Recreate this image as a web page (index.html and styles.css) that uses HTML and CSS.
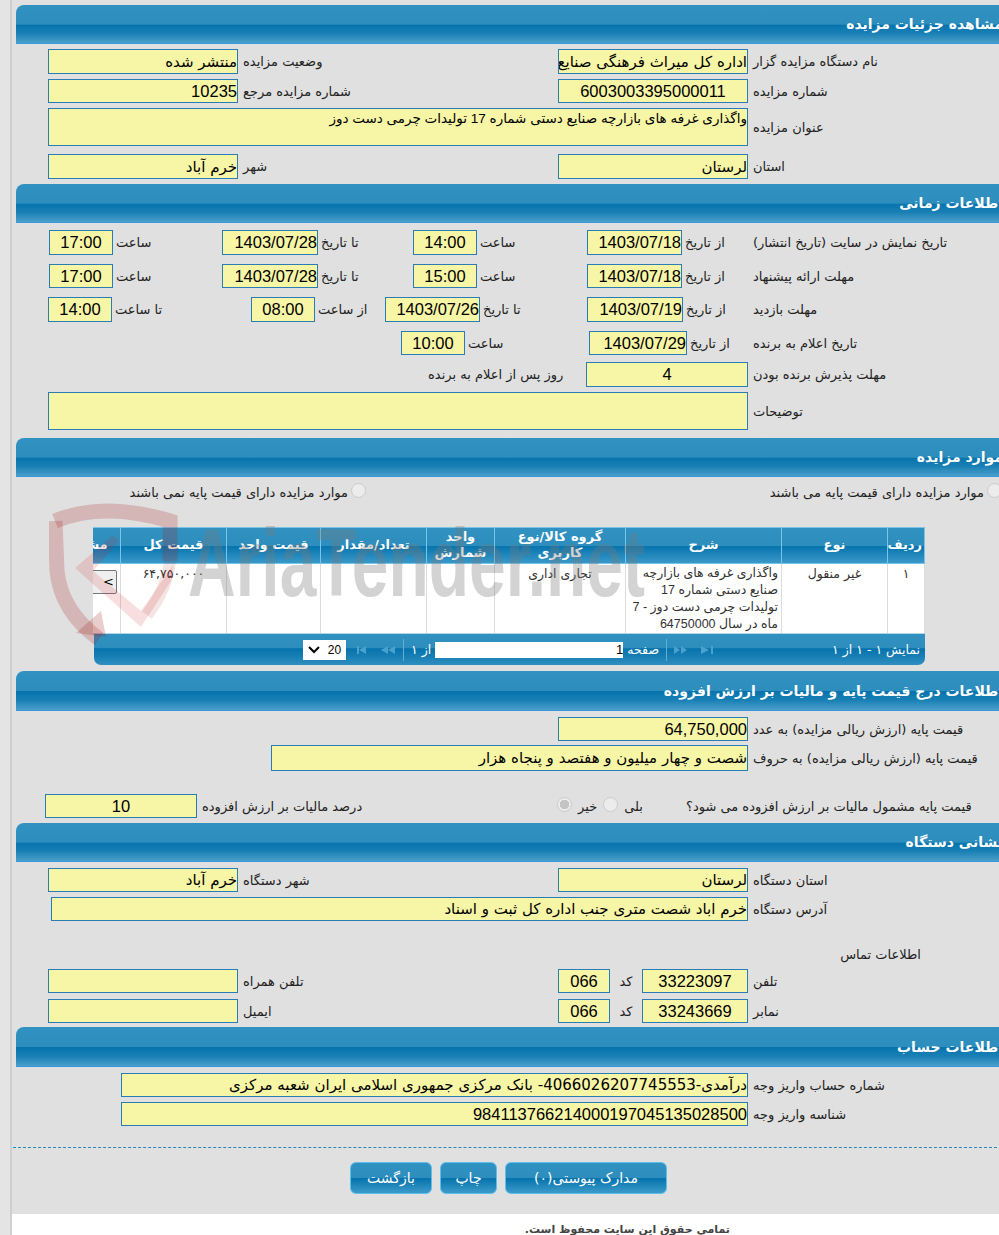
FILE: index.html
```html
<!DOCTYPE html>
<html lang="fa">
<head>
<meta charset="utf-8">
<title>مشاهده جزئیات مزایده</title>
<link rel="stylesheet" href="styles.css">
</head>
<body>
<div class="shell">
<main class="main" dir="rtl">

<h2 class="bar">مشاهده جزئیات مزایده</h2>
<div class="row mt5"><label class="lbl w257">نام دستگاه مزایده گزار</label><input class="fld w190 strong" readonly value="اداره کل میراث فرهنگی صنایع دستی و گردشگری استان لرستان"><label class="lbl w315">وضعیت مزایده</label><input class="fld w190 strong" readonly value="منتشر شده"></div>
<div class="row mt5"><label class="lbl w257">شماره مزایده</label><input class="fld w190 h24 ctr" readonly value="6003003395000011"><label class="lbl w315">شماره مزایده مرجع</label><input class="fld w190 h24" readonly value="10235"></div>
<div class="row mt5"><label class="lbl w257">عنوان مزایده</label><textarea class="fld area w700" readonly>واگذاری غرفه های بازارچه صنایع دستی شماره 17 تولیدات چرمی دست دوز</textarea></div>
<div class="row mt8"><label class="lbl w257">استان</label><input class="fld w190 strong" readonly value="لرستان"><label class="lbl w315">شهر</label><input class="fld w190 strong" readonly value="خرم آباد"></div>

<h2 class="bar mt5">اطلاعات زمانی</h2>
<div class="row mt7"><label class="lbl w257">تاریخ نمایش در سایت (تاریخ انتشار)</label><label class="lbl w63 tight">از تاریخ</label><input class="fld w95" readonly value="1403/07/18"><label class="lbl w107 tight">ساعت</label><input class="fld w64 ctr" readonly value="14:00"><label class="lbl w92 tight">تا تاریخ</label><input class="fld w96" readonly value="1403/07/28"><label class="lbl w106 tight">ساعت</label><input class="fld w64 ctr" readonly value="17:00"></div>
<div class="row mt9"><label class="lbl w257">مهلت ارائه پیشنهاد</label><label class="lbl w63 tight">از تاریخ</label><input class="fld w95 h24" readonly value="1403/07/18"><label class="lbl w107 tight">ساعت</label><input class="fld w64 h24 ctr" readonly value="15:00"><label class="lbl w92 tight">تا تاریخ</label><input class="fld w96 h24" readonly value="1403/07/28"><label class="lbl w106 tight">ساعت</label><input class="fld w64 h24 ctr" readonly value="17:00"></div>
<div class="row mt9"><label class="lbl w257">مهلت بازدید</label><label class="lbl w62 tight">از تاریخ</label><input class="fld w96" readonly value="1403/07/19"><label class="lbl w104 tight">تا تاریخ</label><input class="fld w95" readonly value="1403/07/26"><label class="lbl w67 tight">از ساعت</label><input class="fld w64 ctr" readonly value="08:00"><label class="lbl w136 tight">تا ساعت</label><input class="fld w64 ctr" readonly value="14:00"></div>
<div class="row mt9"><label class="lbl w257">تاریخ اعلام به برنده</label><label class="lbl w58 tight">از تاریخ</label><input class="fld w98 h24" readonly value="1403/07/29"><label class="lbl w121 tight">ساعت</label><input class="fld w64 h24 ctr" readonly value="10:00"></div>
<div class="row mt7"><label class="lbl w257">مهلت پذیرش برنده بودن</label><input class="fld w162 ctr" readonly value="4"><label class="lbl w158 plain">روز پس از اعلام به برنده</label></div>
<div class="row mt5"><label class="lbl w257">توضیحات</label><textarea class="fld area w700" readonly></textarea></div>

<h2 class="bar mt8">موارد مزایده</h2>
<div class="row radios">
  <div class="opt w636"><input class="radio" type="radio" name="base" disabled><span>موارد مزایده دارای قیمت پایه می باشند</span></div>
  <div class="opt"><input class="radio" type="radio" name="base" disabled><span>موارد مزایده دارای قیمت پایه نمی باشند</span></div>
</div>

<div class="grid-wrap">
  <table class="grid">
    <colgroup><col class="c37"><col class="c106"><col class="c156"><col class="c131"><col class="c68"><col class="c106"><col class="c94"><col class="c106"><col class="c76"></colgroup>
    <thead>
      <tr><th>ردیف</th><th>نوع</th><th>شرح</th><th>گروه کالا/نوع کاربری</th><th>واحد شمارش</th><th>تعداد/مقدار</th><th>قیمت واحد</th><th>قیمت کل</th><th>مشاهده</th></tr>
    </thead>
    <tbody>
      <tr><td>۱</td><td>غیر منقول</td><td><div class="clip">واگذاری غرفه های بازارچه صنایع دستی شماره 17 تولیدات چرمی دست دوز - 7 ماه در سال 64750000</div></td><td>تجاری اداری</td><td></td><td></td><td></td><td>۶۴,۷۵۰,۰۰۰</td><td><button class="view" type="button">&gt;</button></td></tr>
    </tbody>
  </table>
</div>
<div class="pager">
  <span class="pg-info">نمایش ۱ - ۱ از ۱</span>
  <svg class="pg-ico" width="46" height="14" viewBox="0 0 46 14"><path d="M4 3l6 4-6 4zM11 3l6 4-6 4zM31 3l8 4-8 4zM41 3h2v8h-2z"/></svg>
  <span class="pg-sep"></span>
  <span class="pg-txt">صفحه</span>
  <input class="pg-num" readonly value="1">
  <span class="pg-txt">از ۱</span>
  <span class="pg-sep"></span>
  <svg class="pg-ico" width="46" height="14" viewBox="0 0 46 14"><path d="M27 7l7-4v8zM34 7l7-4v8zM3 3h2v8h-2zM5 7l7-4v8z"/></svg>
  <span class="pg-select"><svg width="12" height="8" viewBox="0 0 12 8"><path d="M1 1l5 5 5-5" fill="none" stroke="#000" stroke-width="2"/></svg><b>20</b></span>
</div>

<h2 class="bar h40 mt6">اطلاعات درج قیمت پایه و مالیات بر ارزش افزوده</h2>
<div class="row mt6"><label class="lbl w257">قیمت پایه (ارزش ریالی مزایده) به عدد</label><input class="fld w190 h24" readonly value="64,750,000"></div>
<div class="row mt4"><label class="lbl w257">قیمت پایه (ارزش ریالی مزایده) به حروف</label><input class="fld w477 h26 strong" readonly value="شصت و چهار میلیون و هفتصد و پنجاه هزار"></div>
<div class="row mt23"><label class="lbl w319 plain">قیمت پایه مشمول مالیات بر ارزش افزوده می شود؟</label>
  <div class="opts"><span>بلی</span><input class="radio" type="radio" name="vat" disabled><span>خیر</span><input class="radio" type="radio" name="vat" checked disabled></div>
  <label class="lbl w167">درصد مالیات بر ارزش افزوده</label><input class="fld w152 h24 ctr" readonly value="10"></div>

<h2 class="bar mt5">نشانی دستگاه</h2>
<div class="row mt6"><label class="lbl w257">استان دستگاه</label><input class="fld w190 h24 strong" readonly value="لرستان"><label class="lbl w315">شهر دستگاه</label><input class="fld w190 h24 strong" readonly value="خرم آباد"></div>
<div class="row mt5"><label class="lbl w257">آدرس دستگاه</label><input class="fld w697 h24 strong" readonly value="خرم اباد شصت متری جنب اداره کل ثبت و اسناد"></div>
<div class="contact">اطلاعات تماس</div>
<div class="row mt6"><label class="lbl w257">تلفن</label><input class="fld w106 h24 ctr" readonly value="33223097"><label class="lbl w32 code">کد</label><input class="fld w52 h24 ctr" readonly value="066"><label class="lbl w315">تلفن همراه</label><input class="fld w190 h24" readonly></div>
<div class="row mt6"><label class="lbl w257">نمابر</label><input class="fld w106 h24 ctr" readonly value="33243669"><label class="lbl w32 code">کد</label><input class="fld w52 h24 ctr" readonly value="066"><label class="lbl w315">ایمیل</label><input class="fld w190 h24" readonly></div>

<h2 class="bar h40 mt4">اطلاعات حساب</h2>
<div class="row mt6"><label class="lbl w257">شماره حساب واریز وجه</label><input class="fld w627 h24 strong" readonly value="درآمدی-4066026207745553- بانک مرکزی جمهوری اسلامی ایران شعبه مرکزی"></div>
<div class="row mt5"><label class="lbl w257">شناسه واریز وجه</label><input class="fld w627 h24" readonly value="984113766214000197045135028500"></div>

<div class="dash"></div>
<div class="actions">
  <button class="btn b162" type="button">مدارک پیوستی(۰)</button>
  <button class="btn b57" type="button">چاپ</button>
  <button class="btn b82" type="button">بازگشت</button>
</div>
</main>
<footer class="foot" dir="rtl">تمامی حقوق این سایت محفوظ است.</footer>
</div>

<div class="wm" aria-hidden="true">
  <svg class="wm-shield" width="140" height="150" viewBox="0 0 140 150">
    <path d="M6 22 Q55 2 121 22 L121 62" fill="none" stroke="#a82020" stroke-opacity=".22" stroke-width="15"/>
    <path d="M6 22 L8 72 Q12 112 50 140" fill="none" stroke="#a82020" stroke-opacity=".22" stroke-width="15"/>
    <path d="M121 62 Q118 90 98 116" fill="none" stroke="#a82020" stroke-opacity=".12" stroke-width="12"/>
    <path d="M26 69 L64 36 L70 42 L44 72 L92 112 L124 66 L122 82 L92 128 Z" fill="#d02020" fill-opacity=".15"/>
    <path d="M52 112 L57 138 L27 134 Z" fill="#a02020" fill-opacity=".22"/>
  </svg>
  <span class="wm-text">AriaTender.net</span>
</div>
</body>
</html>
```

FILE: styles.css
```css
* { box-sizing: border-box; }
html, body { margin: 0; padding: 0; height: 1235px; overflow: hidden; }
body { background: #e4e4e4; color: #222; font: 13px "Liberation Sans", "DejaVu Sans", sans-serif; position: relative; }

.shell { margin-left: 10px; border-left: 2px solid #cfcfcf; width: 989px; height: 1235px; background: #fff; }
.main { width: 993px; height: 1214px; padding: 5px 0 0 4px; background: #e0e0e0; overflow: visible; }

.bar {
  margin: 0; height: 39px; display: flex; align-items: center; padding-right: 2px;
  width: 989px; color: #fff; font: bold 14px "DejaVu Sans", sans-serif;
  border-top-left-radius: 8px; border-bottom: 1px solid #3a98dc;
  background: linear-gradient(#3191c1 0, #2d8dbd 51%, #0573ad 52%, #1a80b5 75%, #4a9fca 100%);
}
.h40 { height: 40px; }

.row { display: flex; align-items: center; width: 989px; }
.mt4 { margin-top: 4px; } .mt5 { margin-top: 5px; } .mt6 { margin-top: 6px; } .mt7 { margin-top: 7px; }
.mt8 { margin-top: 8px; } .mt9 { margin-top: 9px; } .mt23 { margin-top: 23px; }

.lbl { display: block; flex: none; text-align: left; margin-left: 5px; font-family: "DejaVu Sans", sans-serif; font-size: 13px; color: #222; white-space: nowrap; overflow: visible; }
.tight { margin-left: 2px; }
.plain { margin-left: 0; }
.code { text-align: center; margin-left: 0; }

.fld {
  flex: none; display: block; height: 25px; padding: 0; margin: 0; border: 1px solid #2a7cb4; border-radius: 0;
  background: #f7f5a6; color: #000; outline: 0; text-align: right;
  font: 16.5px "Liberation Sans", "DejaVu Sans", sans-serif;
}
.strong { font: 15px "DejaVu Sans", sans-serif; font-weight: 500; }
.ctr { text-align: center; }
.area { height: 38px; resize: none; overflow: hidden; font: 13.5px/17px "Liberation Sans", "DejaVu Sans", sans-serif; padding: 1px 0 0; }
.h24 { height: 24px; } .h26 { height: 26px; }

.w32 { width: 32px; } .w52 { width: 52px; } .w58 { width: 58px; } .w62 { width: 62px; } .w63 { width: 63px; }
.w64 { width: 64px; } .w67 { width: 67px; } .w92 { width: 92px; } .w95 { width: 95px; } .w96 { width: 96px; }
.w98 { width: 98px; } .w104 { width: 104px; } .w106 { width: 106px; } .w107 { width: 107px; } .w121 { width: 121px; }
.w136 { width: 136px; } .w152 { width: 152px; } .w158 { width: 158px; } .w162 { width: 162px; } .w167 { width: 167px; }
.w190 { width: 190px; } .w257 { width: 252px; } .w315 { width: 315px; } .w319 { width: 319px; } .w477 { width: 477px; }
.w627 { width: 627px; } .w636 { width: 636px; } .w697 { width: 697px; } .w700 { width: 700px; }
.tight.w63, .tight.w107, .tight.w92, .tight.w106, .tight.w62, .tight.w104, .tight.w67, .tight.w136, .tight.w58, .tight.w121 { margin-left: 3px; }

.radios { margin-top: 5px; height: 20px; padding-right: 3px; }
.opt { display: flex; align-items: center; gap: 3px; flex: none; font: 13px "DejaVu Sans", sans-serif; white-space: nowrap; }
.radio { appearance: none; -webkit-appearance: none; flex: none; width: 15px; height: 15px; margin: 0 0 4px; border: 1px solid #cbcbcb; border-radius: 50%; background: #ececec; }
.radio:checked { background: radial-gradient(circle, #c4c4c4 0 4.5px, #ececec 5px); }

.grid-wrap { margin: 25px 80px 0 0; width: 832px; height: 107px; overflow: hidden; border-top: 1px solid #79c5ea; }
.grid { width: 880px; table-layout: fixed; border-collapse: collapse; font-family: "DejaVu Sans", sans-serif; }
.c37 { width: 37px; } .c106 { width: 106px; } .c156 { width: 156px; } .c131 { width: 131px; } .c68 { width: 68px; } .c94 { width: 94px; } .c76 { width: 76px; }
.grid th { height: 35px; padding: 0 2px; color: #fff; font-size: 13px; font-weight: bold; line-height: 16px; text-align: center; border: 1px solid #79c5ea; border-width: 0 1px; background: linear-gradient(#3191c1 0, #2d8dbd 50%, #0573ad 51%, #3a98c8 100%); }
.grid td { height: 69px; padding: 1px 3px 0; vertical-align: top; text-align: center; background: #fff; color: #333; font-size: 12.5px; line-height: 17.3px; border: 1px solid #dcdcdc; border-width: 0 1px; }
.grid tbody tr { border-top: 1px solid #79c5ea; border-bottom: 2px solid #b5d3e6; }
.clip { height: 68px; overflow: hidden; text-align: right; font-family: "Liberation Sans", "DejaVu Sans", sans-serif; }
.view { display: block; width: 42px; height: 24px; margin: 5px 0 0 0; padding: 0 2px 0 0; font: 13px "DejaVu Sans", sans-serif; text-align: right; background: #efefef; border: 1px solid #777; border-radius: 2px; }

.pager {
  display: flex; align-items: center; margin: 0 80px 0 0; width: 831px; height: 31px; color: #fff; font: 12.5px "DejaVu Sans", sans-serif;
  border-radius: 0 0 7px 7px; padding-right: 5px;
  background: linear-gradient(#3191c1 0, #2d8dbd 46%, #0573ad 47%, #1a80b5 75%, #2f8fbf 100%);
}
.pg-info { width: 204px; flex: none; white-space: nowrap; }
.pg-ico { flex: none; fill: #4ba0cc; }
.pg-sep { flex: none; width: 1px; height: 22px; margin: 0 3px; background: #64aed4; }
.pg-txt { flex: none; margin: 0 4px; white-space: nowrap; }
.pg-num { flex: none; width: 188px; height: 16px; padding: 0; border: 0; background: #fff; font: 13px "Liberation Sans", sans-serif; text-align: right; }
.pg-select { flex: none; display: flex; align-items: center; justify-content: space-between; flex-direction: row-reverse; width: 43px; height: 20px; margin-right: 8px; padding: 0 5px; background: #fff; color: #000; font: 12px "Liberation Sans", sans-serif; }
.pg-select b { font-weight: normal; }

.opts { display: flex; align-items: center; flex: none; width: 317px; padding-right: 43px; gap: 6px; font: 13px "DejaVu Sans", sans-serif; }
.contact { margin: 26px 84px 0 0; width: 200px; height: 16px; font: 13px/16px "DejaVu Sans", sans-serif; }

.dash { margin: 21px 8px 0 0; width: 984px; margin-left: -3px; border-top: 1px dashed #2a86bf; }
.actions { display: flex; gap: 8px; margin-top: 14px; padding-right: 338px; }
.btn { flex: none; height: 32px; padding: 0; border: 1px solid #5cbfea; border-radius: 6px; color: #fff; font: 14px "DejaVu Sans", sans-serif; background: linear-gradient(#3191c1 0, #2d8dbd 50%, #0573ad 51%, #3c9ac9 100%); }
.b162 { width: 162px; } .b57 { width: 57px; } .b82 { width: 82px; }

.foot { height: 21px; padding: 9px 269px 0 0; color: #444; font: bold 11px "DejaVu Sans", sans-serif; white-space: nowrap; overflow: hidden; }

.wm { position: absolute; left: 0; top: 0; width: 999px; height: 1235px; pointer-events: none; overflow: hidden; }
.wm-shield { position: absolute; left: 49px; top: 499px; }
.wm-text { position: absolute; left: 188px; top: 508px; font: bold 97px/110px "Liberation Sans", sans-serif; color: rgba(120, 120, 120, .33); transform: scaleX(.68); transform-origin: left top; white-space: nowrap; }
```
